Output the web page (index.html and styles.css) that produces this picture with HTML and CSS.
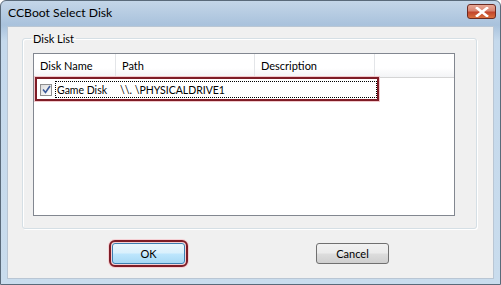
FILE: index.html
```html
<!DOCTYPE html>
<html>
<head>
<meta charset="utf-8">
<link rel="stylesheet" href="styles.css">
</head>
<body>
<div class="window">
  <div class="titlebar">
    <span class="title">CCBoot Select Disk</span>
    <div class="close">
      <svg width="14" height="10" viewBox="0 0 14 10"><path d="M2 1 L12 9 M12 1 L2 9" stroke="#fff" stroke-width="2.6" stroke-linecap="square"/></svg>
    </div>
  </div>
  <div class="client">
    <fieldset class="group">
      <legend>Disk List</legend>
      <div class="listview">
        <div class="header">
          <div class="col c1">Disk Name</div>
          <div class="col c2">Path</div>
          <div class="col c3">Description</div>
          <div class="col c4"></div>
        </div>
        <div class="row">
          <span class="check">
            <svg width="9" height="9" viewBox="0 0 9 9"><path d="M1 4.5 L3.5 7.5 L8 1" fill="none" stroke="#3c5a9a" stroke-width="1.6"/></svg>
          </span>
          <div class="focus">
            <span class="cell n">Game Disk</span>
            <span class="cell p">\\. \PHYSICALDRIVE1</span>
          </div>
          <div class="mark"></div>
        </div>
      </div>
    </fieldset>
    <div class="buttons">
      <button class="btn ok">OK</button>
      <button class="btn">Cancel</button>
    </div>
  </div>
</div>
</body>
</html>
```
FILE: styles.css
```css
html, body { margin: 0; padding: 0; }
body { width: 501px; height: 285px; overflow: hidden; font-family: "Lato", "Open Sans", sans-serif; }
.window {
  width: 501px; height: 285px; box-sizing: border-box;
  border: 1px solid #5a6a7a;
  border-radius: 6px 6px 0 0;
  background: linear-gradient(180deg, #c4d6e8 0px, #a9c2dc 24px, #c5d9ec 40px, #c9dced 100%);
  display: flex; flex-direction: column;
}
.titlebar {
  height: 25px; flex: none; display: flex; align-items: center;
  padding: 0 4px 0 7px; justify-content: space-between;
}
.title { font-size: 12.2px; color: #000; margin-top: -2px; }
.close {
  width: 29px; height: 15px; margin-top: -4px; box-sizing: border-box;
  border: 1px solid #6b2a22; border-radius: 3px;
  background: linear-gradient(180deg, #e8a896 0%, #d88572 45%, #c2452c 55%, #d9703e 100%);
  display: flex; align-items: center; justify-content: center;
}
.client {
  flex: 1; margin: 0 6px 5px 6px; background: #f0f0f0;
  border: 1px solid #b9c6d4;
  display: flex; flex-direction: column; padding: 0 16px 0 14px;
}
.group {
  margin: 5px 0 0 0; padding: 8px 21px 12px 10px;
  border: 1px solid #d5dfe5; border-radius: 3px;
  box-shadow: inset 1px 1px 0 #fff, 1px 1px 0 #fff;
}
.group legend { font-size: 11px; line-height: 13px; padding: 0 2px; margin-left: -2px; color: #000; }
.listview {
  position: relative; height: 163px; box-sizing: border-box;
  border: 1px solid #828790; background: #fff;
}
.header {
  display: flex; height: 23px;
  background: linear-gradient(180deg, #fff 0%, #fff 60%, #f3f4f6 100%);
  border-bottom: 1px solid #d5d5d5;
}
.col { font-size: 11px; line-height: 23px; padding-left: 6px; box-sizing: border-box; border-right: 1px solid #e3e5e8; color: #000; }
.c1 { width: 82px; }
.c2 { width: 139px; }
.c3 { width: 120px; }
.c4 { flex: 1; border-right: none; }
.row { position: relative; height: 23px; display: flex; align-items: center; }
.check {
  width: 12px; height: 12px; box-sizing: border-box; margin-left: 6px;
  border: 1px solid #8f8f8f; background: linear-gradient(135deg, #dcdcdc, #fff);
  display: flex; align-items: center; justify-content: center;
}
.focus {
  margin-left: 3px; width: 322px; height: 17px; box-sizing: border-box;
  border: 1px dotted #000; display: flex; align-items: center;
}
.cell { font-size: 10.5px; color: #000; white-space: nowrap; }
.n { width: 63px; padding-left: 1px; }
.p { padding-left: 0; }
.mark {
  position: absolute; left: 1px; top: -1px; width: 344px; height: 24px; box-sizing: border-box;
  border: 2px solid #7e1c26; box-shadow: 0 0 0 1px #f2c8cc;
}
.buttons { display: flex; gap: 131px; padding: 14px 0 0 90px; }
.btn {
  width: 73px; height: 21px; font-family: inherit; font-size: 11px; color: #000;
  border: 1px solid #707070; border-radius: 3px; padding: 0;
  background: linear-gradient(180deg, #f2f2f2 0%, #ebebeb 48%, #dddddd 52%, #cfcfcf 100%);
}
.btn.ok {
  border-color: #3c7fb1;
  background: linear-gradient(180deg, #eaf6fd 0%, #d9f0fc 48%, #bee6fd 52%, #a7d9f5 100%);
  outline: 2px solid #7e1c26; outline-offset: 1px;
  box-shadow: 0 0 0 4px #f5d0d4;
}
```
